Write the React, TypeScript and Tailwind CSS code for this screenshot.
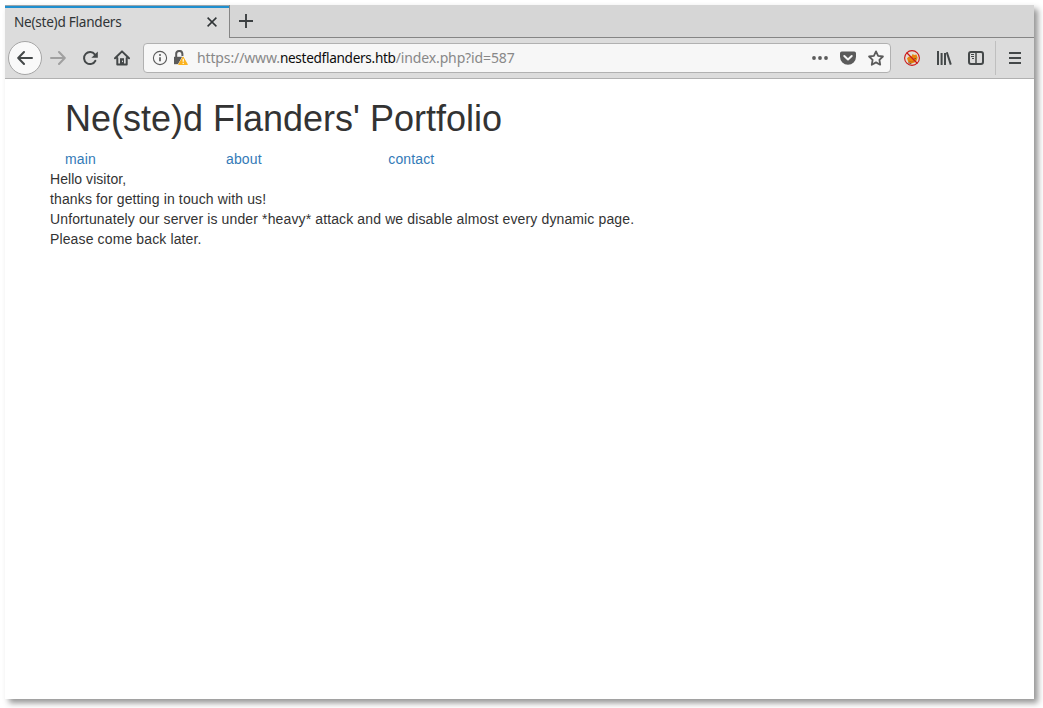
import type { ReactNode } from "react";

function Icon({ children, className = "" }: { children: ReactNode; className?: string }) {
  return (
    <svg viewBox="0 0 16 16" className={`block size-4 shrink-0 ${className}`} fill="none" stroke="currentColor" strokeWidth="2" strokeLinecap="round" strokeLinejoin="round">
      {children}
    </svg>
  );
}

function TabStrip() {
  return (
    <div className="flex h-[33px] shrink-0 bg-[#d6d6d6]">
      <div className="flex w-[225px] shrink-0 flex-col border-r border-[#858585] bg-[#dcdcdc] text-[#303436]">
        <div className="h-px bg-[#9aa5ab]" />
        <div className="h-[2px] bg-[#1f8fcf]" />
        <div className="flex flex-1 items-center justify-between pr-[9px] pb-[2px] pl-[9px]">
          <span className="font-['Noto_Sans',sans-serif] text-[13.6px] leading-4 tracking-[-0.26px] whitespace-nowrap">Ne(ste)d Flanders</span>
          <Icon><path d="M3.6 3.6l8.8 8.8M12.4 3.6l-8.8 8.8" strokeWidth="1.5" strokeLinecap="butt" /></Icon>
        </div>
      </div>
      <div className="flex flex-1 items-center border-b border-[#858585] pl-2 text-[#3c4042]">
        <Icon><path d="M8 1v14M1 8h14" strokeWidth="1.9" strokeLinecap="butt" /></Icon>
      </div>
    </div>
  );
}

function AddressBar() {
  return (
    <div className="ml-[13px] flex h-[30px] w-[748px] shrink-0 items-center rounded-[4px] border border-[#b1b1b1] bg-[#f7f7f7] px-[6px] text-[#5b5b5b]">
      <div className="flex w-[47px] shrink-0 items-center gap-[5px] pl-[2px]">
        <Icon>
          <circle cx="8" cy="8" r="6.6" strokeWidth="1.1" />
          <path d="M8 7.2v4" strokeWidth="1.7" strokeLinecap="butt" />
          <circle cx="8" cy="4.9" r="1" fill="currentColor" stroke="none" />
        </Icon>
        <Icon>
          <path d="M3.2 7V4.4a3.1 3.1 0 0 1 6.2-.6V6" strokeLinecap="butt" />
          <path d="M1 6.8h9.5v7.4H1z" fill="currentColor" stroke="none" />
          <path d="M10.2 6.4l4.7 8.4H5.5z" fill="#fbb21d" stroke="#f7f7f7" strokeWidth="1" />
          <path d="M10.2 7.3l4.2 7.2H6z" fill="#fbb21d" stroke="#fbb21d" strokeWidth="1" />
          <path d="M10.2 8.8v2.9M10.2 12.8v1.2" stroke="#fff" strokeWidth="1.2" strokeLinecap="butt" />
        </Icon>
      </div>
      <div className="flex-1 font-['Noto_Sans',sans-serif] text-[14px] leading-4 tracking-[-0.13px] whitespace-nowrap text-[#888888]">
        https://www.<span className="text-[13.6px] tracking-[-0.3px] text-[#0c0c0c]">nestedflanders.htb</span>/index.php?id=587
      </div>
      <div className="flex gap-3">
        <Icon>
          <g fill="currentColor" stroke="none">
            <circle cx="2" cy="8" r="1.9" /><circle cx="8" cy="8" r="1.9" /><circle cx="14" cy="8" r="1.9" />
          </g>
        </Icon>
        <Icon>
          <path d="M1.8 1.5h12.4A1.8 1.8 0 0 1 16 3.3v3.5a8 8 0 0 1-16 0V3.3a1.8 1.8 0 0 1 1.8-1.8z" fill="currentColor" stroke="none" />
          <path d="M4.3 6L8 9.4 11.7 6" stroke="#f7f7f7" />
        </Icon>
        <Icon>
          <path d="M8 1.4l2.1 4.4 4.8.7-3.5 3.4.8 4.8L8 12.4l-4.2 2.3.8-4.8-3.5-3.4 4.8-.7z" strokeWidth="1.8" />
        </Icon>
      </div>
    </div>
  );
}

function BlockedFoxIcon() {
  return (
    <Icon>
      <circle cx="8" cy="8" r="7.3" fill="#e3dcd4" stroke="none" />
      <path d="M3 8.2L5 6.4l2.4.2L8.6 4l1.6 1 2.2-.6 1.2 3-.6 2.6-2.4 2.6-3.2.8-3-1.2z" fill="#e8850f" stroke="none" />
      <path d="M5.2 11.2l2.6.8 2-1" stroke="#c9680b" strokeWidth="0.9" />
      <path d="M4.6 12.9l2.3.6M10.8 8.6h.8" stroke="#5b4430" strokeWidth="0.9" />
      <circle cx="8" cy="8" r="7.4" stroke="#cc1717" strokeWidth="1.1" />
      <path d="M3 3l10 10" stroke="#cc1717" strokeWidth="1.2" />
    </Icon>
  );
}

function Toolbar() {
  return (
    <div className="flex h-[41px] shrink-0 items-center border-b border-[#b1b1b1] bg-[#dcdcdc] pl-[3px] text-[#444849]">
      <div className="flex size-[34px] shrink-0 items-center justify-center rounded-full border border-[#a5a5a5] bg-[#f9f9f9]">
        <Icon><path d="M15 8H1.5M7 2L1.2 8 7 14" /></Icon>
      </div>
      <Icon className="ml-2 text-[#a0a0a0]"><path d="M1 8h13.5M9 2l5.8 6L9 14" /></Icon>
      <Icon className="ml-4">
        <path d="M13.4 10.8A6 6 0 1 1 12.8 4.4" />
        <path d="M15.8 1.4v6.4H9.4z" fill="currentColor" stroke="none" />
      </Icon>
      <Icon className="ml-4">
        <path d="M1 8.2L8 1.4l7 6.8M3.3 8v6.6h9.4V8" />
        <path d="M6 8.2h4v6.2H6z" fill="currentColor" stroke="none" />
        <path d="M8.5 10.6v1.5" stroke="#dcdcdc" strokeWidth="1" strokeLinecap="butt" />
      </Icon>
      <AddressBar />
      <div className="ml-[13px] flex gap-4">
        <BlockedFoxIcon />
        <Icon>
          <path d="M2 1v14M5.6 3v12M9 3v12M10.8 2.2l4 12.4" strokeLinecap="butt" />
        </Icon>
        <Icon>
          <rect x="1" y="2" width="14" height="12" rx="2" />
          <path d="M8 2v12" strokeWidth="1.5" />
          <path d="M3 4.5h3M3 6.5h3M4 8.5h2" strokeWidth="1" strokeLinecap="butt" />
        </Icon>
      </div>
      <div className="ml-[11px] h-[34px] w-px bg-[#bfbfbf]" />
      <Icon className="ml-[11px]">
        <path d="M2 3h12M2 8h12M2 13h12" strokeLinecap="butt" />
      </Icon>
    </div>
  );
}

function PortfolioPage() {
  return (
    <main className="flex-1 bg-white pt-[20px] pl-[45px] font-['Liberation_Sans',Arial,sans-serif] text-sm leading-5 tracking-[0.127px] text-[#333333]">
      <h1 className="mb-[10px] pl-[15px] text-[36px] leading-10 tracking-normal">Ne(ste)d Flanders' Portfolio</h1>
      <nav className="grid w-[485px] grid-cols-3 text-[#337ab7]">
        <a className="pl-[15px]">main</a>
        <a className="pl-[14.4px]">about</a>
        <a className="pl-[15px]">contact</a>
      </nav>
      <p className="tracking-[0.05px]">Hello visitor,</p>
      <p>thanks for getting in touch with us!</p>
      <p>Unfortunately our server is under *heavy* attack and we disable almost every dynamic page.</p>
      <p>Please come back later.</p>
    </main>
  );
}

export default function App() {
  return (
    <div className="h-[708px] w-[1043px] overflow-hidden bg-white pt-[5px] pl-[5px]">
      <div className="flex h-[694px] w-[1029px] flex-col shadow-[4px_4px_6px_rgba(0,0,0,0.42)]">
        <TabStrip />
        <Toolbar />
        <PortfolioPage />
      </div>
    </div>
  );
}
